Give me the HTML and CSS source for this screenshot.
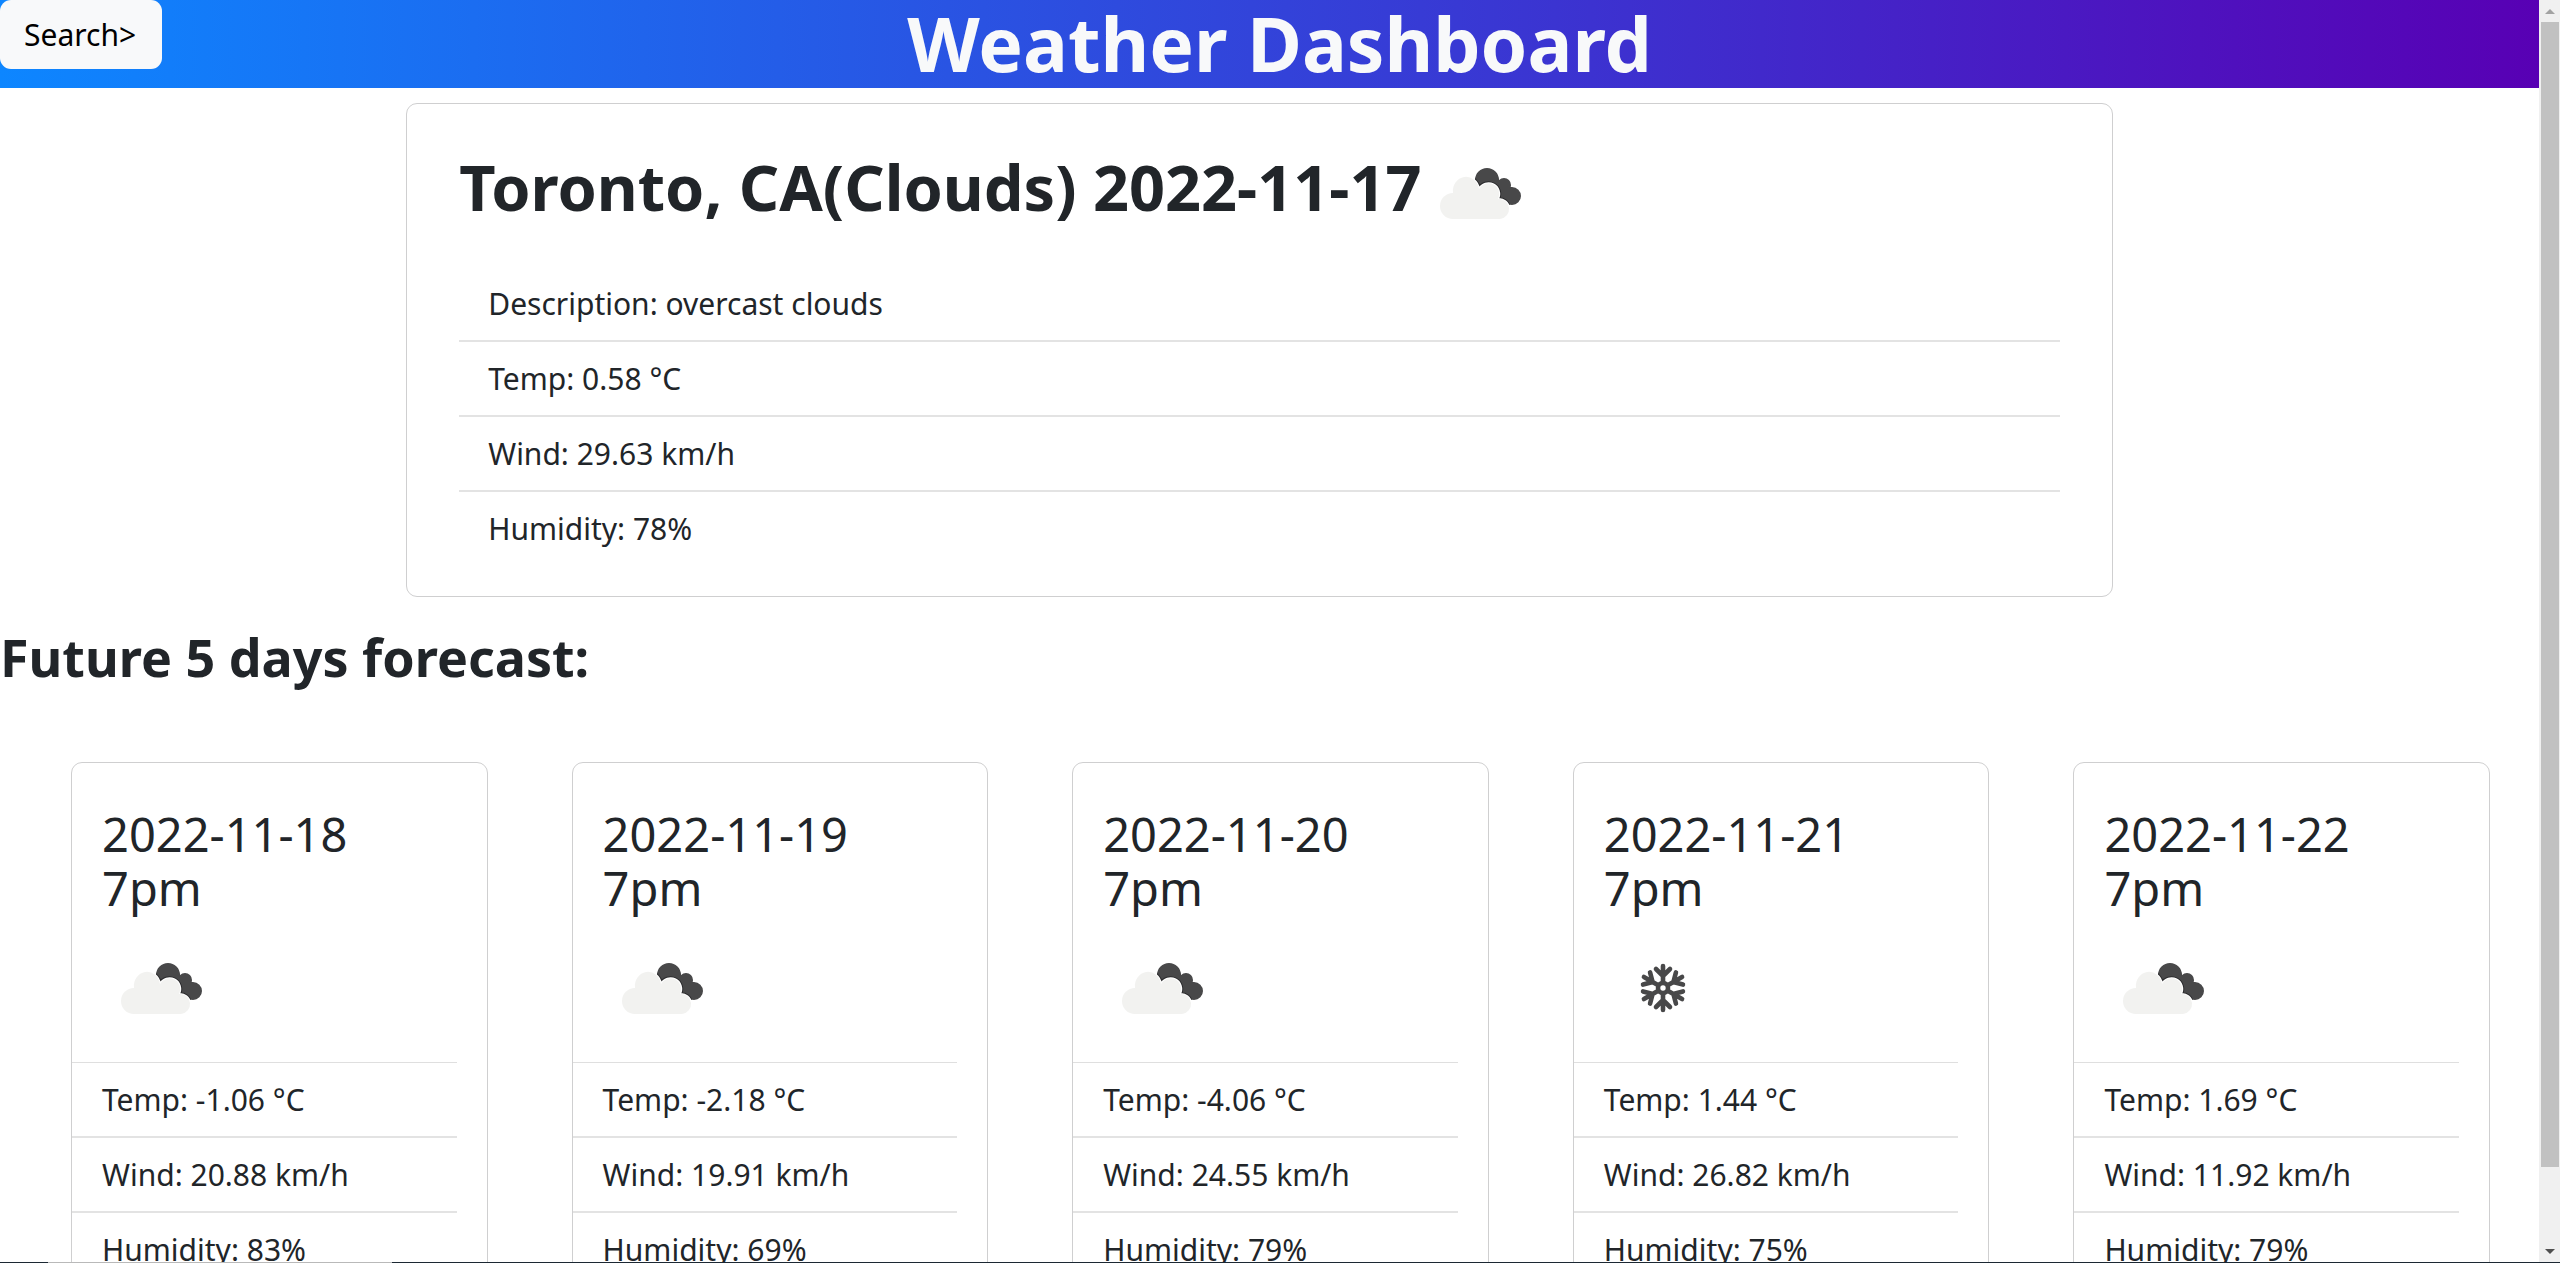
FILE: index.html
```html
<!DOCTYPE html>
<html lang="en">
<head>
<meta charset="utf-8">
<title>Weather Dashboard</title>
<link rel="stylesheet" href="styles.css">
</head>
<body>
<svg class="defs" aria-hidden="true">
  <defs>
    <clipPath id="rear">
      <circle cx="65" cy="37" r="12"/><circle cx="82" cy="42" r="7"/><circle cx="90" cy="53" r="9"/>
      <path d="M60 37H77L86 42L90 53L84 60L60 50Z"/>
    </clipPath>
    <path id="front" d="M31 76A13 13 0 0 1 31 50A13 14 0 0 1 57 46A10 10 0 0 1 76 56A10 10 0 0 1 78 76Z"/>
  </defs>
  <symbol id="clouds" viewBox="0 0 100 100">
    <g clip-path="url(#rear)">
      <path fill="#484849" d="M0 0H100V100H0Z"/>
      <use href="#front" fill="none" stroke="#2a2a2c" stroke-width="4"/>
    </g>
    <use href="#front" fill="#f2f2f0" stroke="#fff" stroke-width="2"/>
    <use href="#front" fill="#f2f2f0"/>
  </symbol>
  <symbol id="snow" viewBox="-8 0 100 100">
    <g fill="none" stroke="#484849" stroke-width="4.6" stroke-linecap="round">
      <circle cx="50" cy="50" r="5"/>
      <g id="arm"><path d="M50 44V28M43 31L50 38L57 31"/></g>
      <use href="#arm" transform="rotate(60 50 50)"/><use href="#arm" transform="rotate(120 50 50)"/><use href="#arm" transform="rotate(180 50 50)"/><use href="#arm" transform="rotate(240 50 50)"/><use href="#arm" transform="rotate(300 50 50)"/>
    </g>
  </symbol>
</svg>
<div class="window">
  <div class="page">
    <header class="header">
      <button class="search" type="button">Search&gt;</button>
      <h1 class="title">Weather Dashboard</h1>
    </header>
    <main>
      <section class="today">
        <h2 class="today-title">Toronto, CA(Clouds) 2022-11-17 <svg class="icon"><use href="#clouds"/></svg></h2>
        <ul class="list">
          <li>Description: overcast clouds</li>
          <li>Temp: 0.58 °C</li>
          <li>Wind: 29.63 km/h</li>
          <li>Humidity: 78%</li>
        </ul>
      </section>
      <h2 class="forecast-title">Future 5 days forecast:</h2>
      <section class="forecast">
        <article class="day">
          <h3 class="date">2022-11-18 7pm</h3>
          <svg class="icon"><use href="#clouds"/></svg>
          <ul class="list"><li>Temp: -1.06 °C</li><li>Wind: 20.88 km/h</li><li>Humidity: 83%</li></ul>
        </article>
        <article class="day">
          <h3 class="date">2022-11-19 7pm</h3>
          <svg class="icon"><use href="#clouds"/></svg>
          <ul class="list"><li>Temp: -2.18 °C</li><li>Wind: 19.91 km/h</li><li>Humidity: 69%</li></ul>
        </article>
        <article class="day">
          <h3 class="date">2022-11-20 7pm</h3>
          <svg class="icon"><use href="#clouds"/></svg>
          <ul class="list"><li>Temp: -4.06 °C</li><li>Wind: 24.55 km/h</li><li>Humidity: 79%</li></ul>
        </article>
        <article class="day">
          <h3 class="date">2022-11-21 7pm</h3>
          <svg class="icon"><use href="#snow"/></svg>
          <ul class="list"><li>Temp: 1.44 °C</li><li>Wind: 26.82 km/h</li><li>Humidity: 75%</li></ul>
        </article>
        <article class="day">
          <h3 class="date">2022-11-22 7pm</h3>
          <svg class="icon"><use href="#clouds"/></svg>
          <ul class="list"><li>Temp: 1.69 °C</li><li>Wind: 11.92 km/h</li><li>Humidity: 79%</li></ul>
        </article>
      </section>
    </main>
  </div>
  <div class="scrollbar" aria-hidden="true">
    <svg class="arrow" viewBox="0 0 21 22"><path fill="#a3a3a3" d="M6 14L11 9L16 14Z"/></svg>
    <div class="track"><div class="thumb"></div></div>
    <svg class="arrow" viewBox="0 0 21 22"><path fill="#505050" d="M6 9L11 14L16 9Z"/></svg>
  </div>
  <div class="edge"></div>
</div>
</body>
</html>
```
FILE: styles.css
```css
* { box-sizing: border-box; }

body {
  margin: 0;
  color: #212529;
  background: #fff;
  font: 30px/45px "Noto Sans", "Open Sans", sans-serif;
}

h1, h2, h3, ul { margin: 0; padding: 0; }
ul { list-style: none; }

.defs { position: absolute; width: 0; height: 0; }

.window {
  display: grid;
  grid-template: minmax(0, 1fr) 1px / minmax(0, 1fr) 21px;
  height: 100vh;
  overflow: hidden;
}

.page { overflow: hidden; }

.header {
  display: grid;
  grid-template-columns: 1fr auto 1fr;
  align-items: start;
  background: linear-gradient(90deg, #0d86ff, #5800b4);
}

.search {
  justify-self: start;
  height: 69px;
  padding: 0 26px 0 24px;
  border: 0;
  border-radius: 11px;
  background: #f8f9fa;
  color: #000;
  font: inherit;
}

.title {
  padding: 0 0 2px 20px;
  color: #f8f9fa;
  font-size: 75px;
  line-height: 86px;
}

.today {
  max-width: 1707px;
  margin: 15px 16% 0;
  padding: 30px 52px 29px;
  border: 1px solid #cfcfd0;
  border-radius: 11px;
}

.today-title {
  display: flex;
  align-items: center;
  height: 109px;
  margin-bottom: 24px;
  padding-bottom: 4px;
  font-size: 63px;
  line-height: 72px;
}

.icon { width: 100px; height: 100px; flex: none; }
.today-title .icon { align-self: flex-start; margin-top: 9px; }

.list li {
  height: 75px;
  padding: 14px 29px;
  border-bottom: 2px solid #e3e3e3;
}

.list li:last-child { border-bottom: 0; }

.forecast-title {
  margin-top: 28px;
  font-size: 52px;
  line-height: 64px;
}

.forecast {
  display: grid;
  grid-template-columns: repeat(5, minmax(0, 1fr));
  gap: 84px;
  padding: 73px 49px 0 71px;
}

.day {
  padding: 44px 30px 30px 0;
  border: 1px solid #cfcfd0;
  border-radius: 11px;
}

.date {
  max-width: 300px;
  padding-left: 30px;
  font-size: 47px;
  font-weight: 400;
  line-height: 54px;
}

.day .icon { display: block; margin: 23px 0 24px 31px; }
.day .list { border-top: 1px solid #dfdfdf; }
.day .list li { padding-left: 30px; }

.scrollbar {
  display: flex;
  flex-direction: column;
  background: #f0f0f0;
}

.arrow { width: 21px; height: 22px; flex: none; }
.track { flex: 1; padding: 0 1px 0 2px; }
.thumb { height: 94%; background: #c1c1c1; }

.edge {
  grid-column: 1 / -1;
  background: linear-gradient(90deg, #1c2833 48px, #b9b9b9 48px 392px, #1c2833 392px);
}
```
